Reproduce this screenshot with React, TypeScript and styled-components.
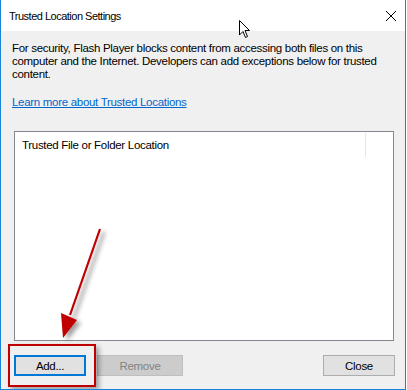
import styled, { createGlobalStyle } from "styled-components";

const GlobalStyle = createGlobalStyle`
  html, body {
    margin: 0;
    padding: 0;
    background: #ffffff;
  }
  body {
    font-family: "Liberation Sans", Arial, sans-serif;
    font-size: 11.5px;
    letter-spacing: -0.3px;
  }
`;

const Window = styled.div`
  position: relative;
  width: 406px;
  height: 390px;
  box-sizing: border-box;
  border: 1px solid #1883d7;
  border-top: none;
  background: #f0f0f0;
  display: flex;
  flex-direction: column;
  overflow: hidden;
`;

const TitleBar = styled.div`
  height: 31px;
  background: #ffffff;
  display: flex;
  align-items: center;
  justify-content: space-between;
  padding: 0 9px 0 8px;
  flex-shrink: 0;
`;

const Title = styled.div`
  font-size: 11px;
  letter-spacing: -0.5px;
  color: #000000;
  padding-top: 1px;
`;

const CloseGlyph = styled.svg`
  width: 10px;
  height: 10px;
  display: block;
`;

const Body = styled.div`
  flex: 1;
  display: flex;
  flex-direction: column;
  padding: 11px 10px 0 11px;
`;

const Intro = styled.p`
  margin: 0;
  line-height: 13px;
  color: #000000;
  width: 370px;
`;

const Link = styled.a`
  display: block;
  align-self: flex-start;
  margin-top: 15px;
  line-height: 13px;
  color: #0066cc;
  text-decoration: underline;
`;

const ListBox = styled.div`
  margin: 22px 1px 0 2px;
  height: 210px;
  box-sizing: border-box;
  border: 1px solid #828790;
  background: #ffffff;
`;

const HeaderRow = styled.div`
  display: flex;
  height: 24px;
  margin-top: 1px;
`;

const HeaderCell = styled.div<{ $width?: number }>`
  ${(p) => (p.$width ? `width: ${p.$width}px;` : "flex: 1;")}
  line-height: 24px;
  padding-left: 7px;
  color: #000000;
  border-right: 1px solid #e5e5e5;
  box-sizing: border-box;
  &:last-child {
    border-right: none;
  }
`;

const ButtonRow = styled.div`
  display: flex;
  align-items: center;
  gap: 11px;
  margin: 14px 0 0 2px;
`;

const Button = styled.button<{ $focused?: boolean }>`
  width: 72px;
  height: 21px;
  box-sizing: border-box;
  font-family: inherit;
  font-size: 11.5px;
  letter-spacing: -0.3px;
  padding: 0;
  color: #000000;
  background: #e1e1e1;
  border: ${(p) => (p.$focused ? "2px solid #0078d7" : "1px solid #adadad")};
  &:disabled {
    color: #838383;
    background: #cccccc;
    border-color: #bfbfbf;
  }
`;

const Spacer = styled.div`
  flex: 1;
`;

const WideButton = styled(Button)`
  width: 86px;
`;

const Highlight = styled.div`
  position: absolute;
  left: 7px;
  top: 344px;
  width: 88px;
  height: 43px;
  box-sizing: border-box;
  border: 2px solid #c00000;
  box-shadow: 3px 3px 5px rgba(0, 0, 0, 0.35);
`;

const Overlay = styled.svg`
  position: absolute;
  left: 0;
  top: 0;
  pointer-events: none;
`;

export default function App() {
  return (
    <>
      <GlobalStyle />
      <Window>
        <TitleBar>
          <Title>Trusted Location Settings</Title>
          <CloseGlyph viewBox="0 0 10 10">
            <path d="M0 0 L10 10 M10 0 L0 10" stroke="#000" strokeWidth="1" />
          </CloseGlyph>
        </TitleBar>
        <Body>
          <Intro>
            For security, Flash Player blocks content from accessing both files on this
            computer and the Internet. Developers can add exceptions below for trusted
            content.
          </Intro>
          <Link href="#">Learn more about Trusted Locations</Link>
          <ListBox>
            <HeaderRow>
              <HeaderCell $width={351}>Trusted File or Folder Location</HeaderCell>
              <HeaderCell />
            </HeaderRow>
          </ListBox>
          <ButtonRow>
            <Button $focused>Add...</Button>
            <WideButton disabled>Remove</WideButton>
            <Spacer />
            <Button>Close</Button>
          </ButtonRow>
        </Body>
        <Highlight />
        <Overlay width="406" height="390" viewBox="0 0 406 390">
          <defs>
            <filter id="sh" x="-50%" y="-50%" width="200%" height="200%">
              <feGaussianBlur stdDeviation="2" />
            </filter>
          </defs>
          <g transform="translate(4 3)" opacity="0.45" filter="url(#sh)">
            <line x1="99" y1="229" x2="69" y2="315" stroke="#333" strokeWidth="3" />
            <polygon points="60,313 76,320 62,338" fill="#333" />
          </g>
          <line x1="99" y1="229" x2="69" y2="315" stroke="#c00000" strokeWidth="2.2" />
          <polygon points="60,313 76,320 62,338" fill="#c00000" />
          <path
            d="M238.5 20.5 L238.5 35 L242 31.5 L244.5 37.5 L246.5 36.5 L244 30.5 L248.5 30.5 Z"
            fill="#ffffff"
            stroke="#000000"
            strokeWidth="1"
          />
        </Overlay>
      </Window>
    </>
  );
}
